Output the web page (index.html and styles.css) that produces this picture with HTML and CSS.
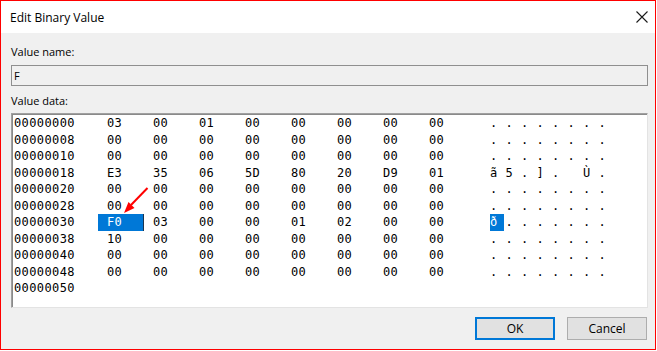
FILE: index.html
```html
<!DOCTYPE html>
<html lang="en">
<head>
    <meta charset="UTF-8">
    <title>Edit Binary Value</title>
    <link rel="stylesheet" href="styles.css">
</head>
<body>
    <div class="window">
        <div class="titlebar">
            <span class="title">Edit Binary Value</span>
            <svg class="close" width="12" height="12" viewBox="0 0 12 12">
                <path d="M0.5 0.5 L11.5 11.5 M11.5 0.5 L0.5 11.5" stroke="#1a1a1a" stroke-width="1.1" fill="none"/>
            </svg>
        </div>
        <div class="content">
            <div class="label">Value name:</div>
            <div class="name-field">F</div>
            <div class="label label-data">Value data:</div>
            <div class="hexbox">
                <div class="row"><span class="addr">00000000</span><span class="hex">03</span><span class="hex">00</span><span class="hex">01</span><span class="hex">00</span><span class="hex">00</span><span class="hex">00</span><span class="hex">00</span><span class="hex">00</span><span class="ascii"><span>.</span><span>.</span><span>.</span><span>.</span><span>.</span><span>.</span><span>.</span><span>.</span></span></div>
                <div class="row"><span class="addr">00000008</span><span class="hex">00</span><span class="hex">00</span><span class="hex">00</span><span class="hex">00</span><span class="hex">00</span><span class="hex">00</span><span class="hex">00</span><span class="hex">00</span><span class="ascii"><span>.</span><span>.</span><span>.</span><span>.</span><span>.</span><span>.</span><span>.</span><span>.</span></span></div>
                <div class="row"><span class="addr">00000010</span><span class="hex">00</span><span class="hex">00</span><span class="hex">00</span><span class="hex">00</span><span class="hex">00</span><span class="hex">00</span><span class="hex">00</span><span class="hex">00</span><span class="ascii"><span>.</span><span>.</span><span>.</span><span>.</span><span>.</span><span>.</span><span>.</span><span>.</span></span></div>
                <div class="row"><span class="addr">00000018</span><span class="hex">E3</span><span class="hex">35</span><span class="hex">06</span><span class="hex">5D</span><span class="hex">80</span><span class="hex">20</span><span class="hex">D9</span><span class="hex">01</span><span class="ascii"><span>ã</span><span>5</span><span>.</span><span>]</span><span>.</span><span> </span><span>Ù</span><span>.</span></span></div>
                <div class="row"><span class="addr">00000020</span><span class="hex">00</span><span class="hex">00</span><span class="hex">00</span><span class="hex">00</span><span class="hex">00</span><span class="hex">00</span><span class="hex">00</span><span class="hex">00</span><span class="ascii"><span>.</span><span>.</span><span>.</span><span>.</span><span>.</span><span>.</span><span>.</span><span>.</span></span></div>
                <div class="row"><span class="addr">00000028</span><span class="hex">00</span><span class="hex">00</span><span class="hex">00</span><span class="hex">00</span><span class="hex">00</span><span class="hex">00</span><span class="hex">00</span><span class="hex">00</span><span class="ascii"><span>.</span><span>.</span><span>.</span><span>.</span><span>.</span><span>.</span><span>.</span><span>.</span></span></div>
                <div class="row"><span class="addr">00000030</span><span class="hex sel">F0</span><span class="hex">03</span><span class="hex">00</span><span class="hex">00</span><span class="hex">01</span><span class="hex">02</span><span class="hex">00</span><span class="hex">00</span><span class="ascii"><span class="sel">ð</span><span>.</span><span>.</span><span>.</span><span>.</span><span>.</span><span>.</span><span>.</span></span></div>
                <div class="row"><span class="addr">00000038</span><span class="hex">10</span><span class="hex">00</span><span class="hex">00</span><span class="hex">00</span><span class="hex">00</span><span class="hex">00</span><span class="hex">00</span><span class="hex">00</span><span class="ascii"><span>.</span><span>.</span><span>.</span><span>.</span><span>.</span><span>.</span><span>.</span><span>.</span></span></div>
                <div class="row"><span class="addr">00000040</span><span class="hex">00</span><span class="hex">00</span><span class="hex">00</span><span class="hex">00</span><span class="hex">00</span><span class="hex">00</span><span class="hex">00</span><span class="hex">00</span><span class="ascii"><span>.</span><span>.</span><span>.</span><span>.</span><span>.</span><span>.</span><span>.</span><span>.</span></span></div>
                <div class="row"><span class="addr">00000048</span><span class="hex">00</span><span class="hex">00</span><span class="hex">00</span><span class="hex">00</span><span class="hex">00</span><span class="hex">00</span><span class="hex">00</span><span class="hex">00</span><span class="ascii"><span>.</span><span>.</span><span>.</span><span>.</span><span>.</span><span>.</span><span>.</span><span>.</span></span></div>
                <div class="row"><span class="addr">00000050</span></div>
            </div>
            <div class="buttons">
                <button class="btn btn-default">OK</button>
                <button class="btn">Cancel</button>
            </div>
        </div>
        <!-- red annotation arrow pointing at the selected byte -->
        <svg class="arrow" width="656" height="350" viewBox="0 0 656 350">
            <line x1="147.5" y1="188" x2="131" y2="205" stroke="#f00" stroke-width="2"/>
            <polygon points="124,213 134.5,208 128.5,202" fill="#f00"/>
        </svg>
    </div>
</body>
</html>
```

FILE: styles.css
```css
body {
    margin: 0;
    background: #fff;
    font-family: 'Open Sans', 'Liberation Sans', sans-serif;
    color: #000;
}
.window {
    position: relative;
    width: 656px;
    height: 350px;
    box-sizing: border-box;
    border: 1px solid #f00;
    background: #f0f0f0;
}
.titlebar {
    height: 32px;
    background: #fff;
    display: flex;
    align-items: center;
    justify-content: space-between;
    padding-left: 9px;
}
.title {
    font-size: 12px;
}
.close {
    margin-right: 7px;
}
.content {
    padding: 11px 7px 0 10px;
}
.label {
    font-size: 11px;
    line-height: 15px;
}
.label-data {
    margin-top: 7px;
}
.name-field {
    margin-top: 6px;
    height: 21px;
    box-sizing: border-box;
    border: 1px solid #8f8f8f;
    padding-left: 2px;
    font-size: 11px;
    line-height: 19px;
}
.hexbox {
    margin-top: 5px;
    height: 195px;
    box-sizing: border-box;
    background: #fff;
    border-top: 1px solid #a0a0a0;
    border-left: 1px solid #a0a0a0;
    border-right: 1px solid #e3e3e3;
    border-bottom: 1px solid #e3e3e3;
    box-shadow: inset 1px 1px 0 #8a8a8a;
    padding: 1px 0 0 2px;
    font-family: 'DejaVu Sans Mono', monospace;
    font-size: 12px;
    letter-spacing: 0.4px;
}
.row {
    display: grid;
    grid-template-columns: 84px repeat(8, 46px) auto;
    height: 16.5px;
    line-height: 16.5px;
}
.hex {
    padding-left: 9px;
}
.hex.sel {
    background: #0078d7;
    color: #fff;
    box-shadow: inset -1px 0 0 #1b3550;
}
.ascii {
    display: flex;
    padding-left: 24px;
}
.ascii span {
    width: 15.5px;
    white-space: pre;
}
.ascii .sel {
    width: 14px;
    margin-right: 1.5px;
    background: #0078d7;
    color: #fff;
}
.buttons {
    margin-top: 9px;
    display: flex;
    justify-content: flex-end;
    gap: 12px;
    padding-right: 1px;
}
.btn {
    width: 80px;
    height: 23px;
    box-sizing: border-box;
    background: #e1e1e1;
    border: 1px solid #adadad;
    font-family: 'Open Sans', 'Liberation Sans', sans-serif;
    font-size: 12px;
    color: #000;
    padding: 0;
}
.btn-default {
    border: 2px solid #0078d7;
}
.arrow {
    position: absolute;
    top: -1px;
    left: -1px;
    pointer-events: none;
}
```
